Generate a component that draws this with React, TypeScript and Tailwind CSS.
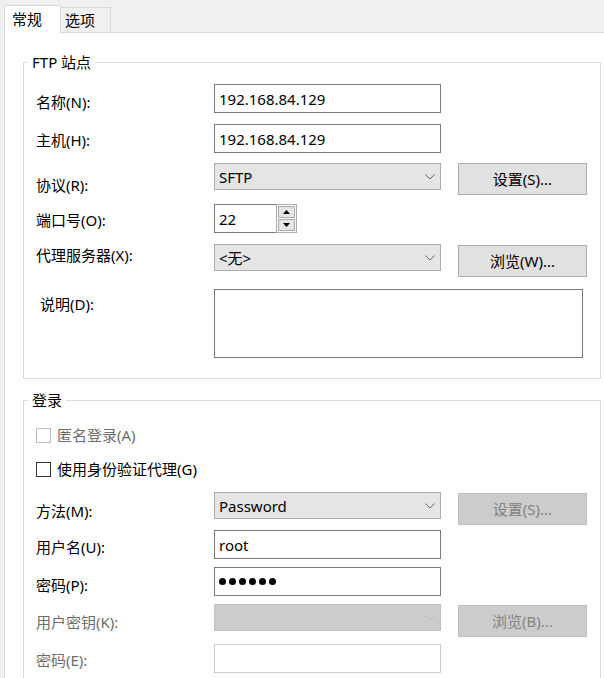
import React from 'react';

const FONT = "font-['Noto_Sans','Noto_Sans_CJK_SC',sans-serif]";

function Chevron({ disabled }: { disabled?: boolean }) {
  return (
    <svg width="10" height="6" viewBox="0 0 10 6" className="ml-auto mr-[5px] shrink-0">
      <polyline
        points="0.5,0.5 5,5 9.5,0.5"
        fill="none"
        stroke={disabled ? '#b8b8b8' : '#606060'}
        strokeWidth="1"
      />
    </svg>
  );
}

function TextBox({ value, disabled, children }: { value?: string; disabled?: boolean; children?: React.ReactNode }) {
  return (
    <div
      className={
        'flex h-[29px] w-[227px] items-center border bg-white pl-[4px] ' +
        (disabled ? 'border-[#cccccc]' : 'border-[#7a7a7a]')
      }
    >
      {children ?? <span className="leading-[20px]">{value}</span>}
    </div>
  );
}

function ComboBox({ value, disabled }: { value?: string; disabled?: boolean }) {
  return (
    <div
      className={
        'flex h-[27px] w-[227px] items-center border pl-[4px] ' +
        (disabled ? 'border-[#bfbfbf] bg-[#cccccc]' : 'border-[#adadad] bg-[#e5e5e5]')
      }
    >
      <span className="leading-[20px]">{value}</span>
      <Chevron disabled={disabled} />
    </div>
  );
}

function Button({ text, disabled, className = '' }: { text: string; disabled?: boolean; className?: string }) {
  return (
    <div
      className={
        'ml-[17px] flex h-[32px] w-[129px] items-center justify-center border leading-[20px] ' +
        (disabled ? 'border-[#bfbfbf] bg-[#cccccc] text-[#838383] ' : 'border-[#adadad] bg-[#e1e1e1] ') +
        className
      }
    >
      {text}
    </div>
  );
}

function Spinner({ value }: { value: string }) {
  return (
    <div className="flex h-[29px]">
      <div className="flex w-[62px] items-center border border-r-0 border-[#7a7a7a] bg-white pl-[4px]">
        <span className="leading-[20px]">{value}</span>
      </div>
      <div className="flex w-[21px] flex-col gap-[1px] border border-[#adadad] bg-white p-[1px]">
        <div className="flex flex-1 items-center justify-center border border-[#adadad] bg-[#e5e5e5]">
          <svg width="7" height="4" viewBox="0 0 7 4">
            <polygon points="3.5,0 7,4 0,4" fill="#000" />
          </svg>
        </div>
        <div className="flex flex-1 items-center justify-center border border-[#adadad] bg-[#e5e5e5]">
          <svg width="7" height="4" viewBox="0 0 7 4">
            <polygon points="0,0 7,0 3.5,4" fill="#000" />
          </svg>
        </div>
      </div>
    </div>
  );
}

function CheckBox({ label, disabled, className }: { label: string; disabled?: boolean; className: string }) {
  return (
    <div className={'flex h-[20px] items-center ' + className}>
      <div
        className={
          'h-[15px] w-[15px] shrink-0 border bg-white ' + (disabled ? 'border-[#bcbcbc]' : 'border-[#333333]')
        }
      />
      <span className={'ml-[6px] leading-[20px] ' + (disabled ? 'text-[#6d6d6d]' : '')}>{label}</span>
    </div>
  );
}

function Row({
  className,
  label,
  labelClass,
  children,
}: {
  className: string;
  label: string;
  labelClass: string;
  children: React.ReactNode;
}) {
  return (
    <div className={'flex items-start ' + className}>
      <div className={'w-[178px] shrink-0 leading-[20px] ' + labelClass}>{label}</div>
      {children}
    </div>
  );
}

function Group({ title, className, children }: { title: string; className: string; children: React.ReactNode }) {
  return (
    <div className={'relative ml-[18px] w-[578px] border border-[#dcdcdc] pl-[12px] ' + className}>
      <span className="absolute left-[4px] top-[-11px] bg-white px-[4px] leading-[20px]">{title}</span>
      {children}
    </div>
  );
}

export default function App() {
  return (
    <div className={'h-[678px] w-[604px] overflow-hidden bg-[#f0f0f0] text-[15px] text-black ' + FONT}>
      {/* tabs */}
      <div className="flex h-[32px] items-end pl-[4px]">
        <div className="relative z-10 mb-[-1px] flex h-[28px] w-[57px] items-start border border-b-0 border-[#d9d9d9] bg-white pl-[7px] pt-[3px] leading-[20px]">
          常规
        </div>
        <div className="flex h-[25px] w-[50px] items-start border-r border-t border-[#d9d9d9] pl-[4px] pt-[2px] leading-[20px]">
          选项
        </div>
      </div>

      <div className="ml-[4px] h-[646px] border-l border-t border-[#d9d9d9] bg-white pt-[29px]">
        <Group title="FTP 站点" className="pb-[20px]">
          <Row className="mt-[21px]" label="名称(N):" labelClass="pt-[8px]">
            <TextBox value="192.168.84.129" />
          </Row>
          <Row className="mt-[11px]" label="主机(H):" labelClass="pt-[6px]">
            <TextBox value="192.168.84.129" />
          </Row>
          <Row className="mt-[10px]" label="协议(R):" labelClass="pt-[12px]">
            <ComboBox value="SFTP" />
            <Button text="设置(S)..." />
          </Row>
          <Row className="mt-[9px]" label="端口号(O):" labelClass="pt-[6px]">
            <Spinner value="22" />
          </Row>
          <Row className="mt-[11px]" label="代理服务器(X):" labelClass="pt-[1px]">
            <ComboBox value="<无>" />
            <Button text="浏览(W)..." className="mt-[1px]" />
          </Row>
          <Row className="mt-[12px]" label="说明(D):" labelClass="pl-[4px] pt-[5px]">
            <div className="h-[69px] w-[369px] border border-[#7a7a7a] bg-white" />
          </Row>
        </Group>

        <Group title="登录" className="mt-[21px] h-[400px]">
          <CheckBox className="mt-[24px]" label="匿名登录(A)" disabled />
          <CheckBox className="mt-[14px]" label="使用身份验证代理(G)" />
          <Row className="mt-[13px]" label="方法(M):" labelClass="pt-[9px]">
            <ComboBox value="Password" />
            <Button text="设置(S)..." className="mt-[1px]" disabled />
          </Row>
          <Row className="mt-[5px]" label="用户名(U):" labelClass="pt-[7px]">
            <TextBox value="root" />
          </Row>
          <Row className="mt-[8px]" label="密码(P):" labelClass="pt-[8px]">
            <TextBox>
              <div className="flex gap-[3px]">
                {Array.from({ length: 6 }).map((_, i) => (
                  <span key={i} className="block h-[7px] w-[7px] rounded-full bg-black" />
                ))}
              </div>
            </TextBox>
          </Row>
          <Row className="mt-[8px]" label="用户密钥(K):" labelClass="pt-[8px] text-[#6d6d6d]">
            <ComboBox disabled />
            <Button text="浏览(B)..." className="mt-[1px]" disabled />
          </Row>
          <Row className="mt-[7px]" label="密码(E):" labelClass="pt-[6px] text-[#6d6d6d]">
            <TextBox disabled />
          </Row>
        </Group>
      </div>
    </div>
  );
}
